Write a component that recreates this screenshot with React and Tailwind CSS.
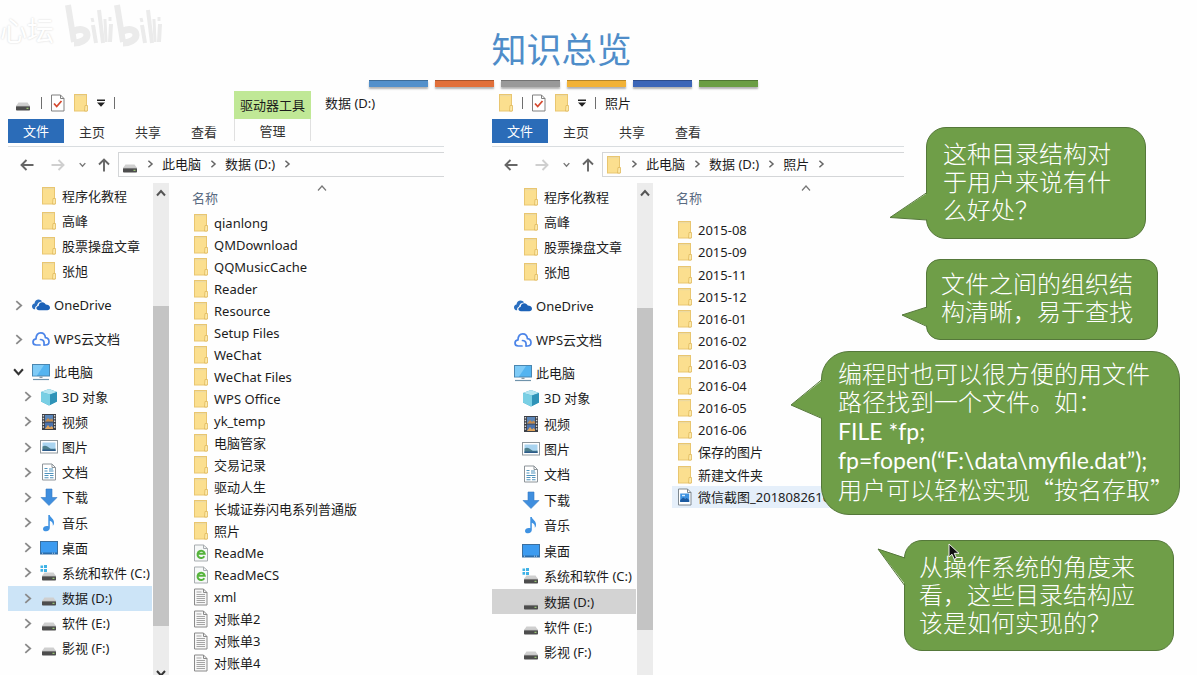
import React from "react";

/* ---------- icons ---------- */

function FolderIcon() {
  return (
    <svg width="14" height="18" viewBox="0 0 14 18" aria-hidden="true" className="shrink-0">
      <rect x="0.5" y="0.5" width="12" height="16.5" fill="#fbdf8f" stroke="#e9c670" />
      <path d="M11 11.5h2.5v5.5H10.5z" fill="#fde9a9" stroke="#dfb95c" strokeWidth="0.8" />
      <path d="M1 1h11v1.2H1z" fill="#ecd9a0" />
    </svg>
  );
}

function DriveIcon({ windows }) {
  return (
    <svg width="18" height="18" viewBox="0 0 18 18" aria-hidden="true" className="shrink-0">
      <path d="M4.5 8.5h9l2.5 3.5H2z" fill="#cfcfcf" />
      <rect x="2" y="12" width="14" height="4.5" rx="0.8" fill="#4d4d4d" />
      <path d="M2 12.4h14" stroke="#8a8a8a" strokeWidth="0.8" />
      <rect x="12.5" y="13.8" width="2" height="1" fill="#a8e07a" />
      {windows && (
        <path d="M0.5 1.5h2.6v2.6H.5zM4 1h3v3.1H4zM.5 5h2.6v2.7H.5zM4 5h3v3H4z" fill="#3fb2e6" />
      )}
    </svg>
  );
}

function OneDriveIcon() {
  return (
    <svg width="18" height="18" viewBox="0 0 18 18" aria-hidden="true" className="shrink-0">
      <path d="M3.2 13.3C1.2 13.2 0 12 0 10.400c0-1.500 1-2.600 2.500-2.900C2.700 5 4.500 3.600 6.600 3.600c1.400 0 2.600.7 3.400 1.800-3 .2-4.800 2-4.900 4.200-1.600.7-2.300 2.200-1.900 3.700z" fill="#2a6fc0" />
      <path d="M7 14.300c-1.600 0-2.600-.9-2.600-2.200 0-1.200.9-2.100 2.200-2.200C6.700 7.600 8.200 6.200 10.200 6.200c1.700 0 3 .9 3.600 2.400 2 0 4.200 1 4.200 3.200 0 1.500-1.200 2.500-2.700 2.500z" fill="#1c62b8" />
    </svg>
  );
}

function WpsCloudIcon() {
  return (
    <svg width="18" height="18" viewBox="0 0 18 18" aria-hidden="true" className="shrink-0" fill="none" stroke="#4b84e8" strokeWidth="1.700" strokeLinecap="round">
      <path d="M8 15H4.300C2.300 15 1 13.700 1 12s1.300-3 3-3.200C4 5 6 2.800 8.700 2.800c2.600 0 4.500 2 4.700 4.800 2 .3 3.600 1.700 3.600 3.900S15.500 15 13.500 15h-1.300" />
      <path d="M8.500 9.500c2 0 3 .8 3.400 2.200.2.900.2 1.800.2 3.300" />
    </svg>
  );
}

function ComputerIcon() {
  return (
    <svg width="18" height="18" viewBox="0 0 18 18" aria-hidden="true" className="shrink-0">
      <rect x="0.5" y="1.500" width="17" height="11.500" fill="#54b4f0" stroke="#4a86b0" />
      <path d="M1 2h11L5 12.500H1z" fill="#7fcbf7" />
      <path d="M7.500 13.500h3v1.500h-3z" fill="#8a9aa6" />
      <path d="M1 16.500h16" stroke="#6f93ab" strokeWidth="1.200" />
    </svg>
  );
}

function CubeIcon() {
  return (
    <svg width="18" height="18" viewBox="0 0 18 18" aria-hidden="true" className="shrink-0">
      <path d="M9 1l8 3v9.500L9 17.500 1 13.500V4z" fill="#43a9c9" />
      <path d="M9 1l8 3L10 6.500 1 4z" fill="#b5e6f2" />
      <path d="M1 4L10 6.500v10.500L9 17.500 1 13.500z" fill="#79cfe4" />
      <path d="M10 6.500L17 4v9.500L10 17z" fill="#2f93b8" />
    </svg>
  );
}

function VideoIcon() {
  return (
    <svg width="18" height="18" viewBox="0 0 18 18" aria-hidden="true" className="shrink-0">
      <rect x="2" y="1" width="14" height="16" fill="#3c3f46" />
      <path d="M3.400 2v14M14.600 2v14" stroke="#d9d9d9" strokeWidth="1.400" strokeDasharray="1.500 1.300" />
      <rect x="5" y="2" width="8" height="6.500" fill="#5b86b9" />
      <path d="M5 8.500l3-3.500 2 2 1.500-1.500L13 7v1.500z" fill="#c58a4a" />
      <rect x="5" y="9.500" width="8" height="6.500" fill="#4a72ad" />
      <path d="M5 16l3-4 2 2.500 1.500-1.500L13 14.500V16z" fill="#e0a45b" />
    </svg>
  );
}

function PictureIcon() {
  return (
    <svg width="18" height="18" viewBox="0 0 18 18" aria-hidden="true" className="shrink-0">
      <rect x="0.500" y="2.500" width="17" height="12.500" fill="#fff" stroke="#8f979c" />
      <rect x="2.500" y="4.500" width="13" height="8.500" fill="#a9d4f0" />
      <path d="M2.500 8.500c3-2 5 0 7 1.500s4 .5 6 .5V13h-13z" fill="#4d7f8c" />
      <path d="M2.500 11.500h13V13h-13z" fill="#2d5b8a" />
    </svg>
  );
}

function DocumentIcon() {
  return (
    <svg width="18" height="18" viewBox="0 0 18 18" aria-hidden="true" className="shrink-0">
      <path d="M2.500 1h9.500l3.500 3.500V17h-13z" fill="#fff" stroke="#8d9499" />
      <path d="M12 1v3.500h3.500" fill="none" stroke="#8d9499" />
      <path d="M4.500 5.500h3M9 6h4M4.500 8h3M9 8h4.500M4.500 10.500h9M4.500 12.500h4M10 12.500h3.500M4.500 14.800h4M10 14.800h3.500" stroke="#4f93bd" strokeWidth="1.100" />
    </svg>
  );
}

function DownloadIcon() {
  return (
    <svg width="18" height="18" viewBox="0 0 18 18" aria-hidden="true" className="shrink-0">
      <path d="M6 1h6v8.500h5L9 17.500 1 9.500h5z" fill="#3f8ede" stroke="#3279c4" strokeWidth="0.600" />
    </svg>
  );
}

function MusicIcon() {
  return (
    <svg width="18" height="18" viewBox="0 0 18 18" aria-hidden="true" className="shrink-0">
      <path d="M8.300 1h1.500c.3 2.500 4.700 3.800 4.200 8.200-.1 1.200-.5 2-1.200 2.600.5-2.700-.8-4.300-3-5V14c0 1.700-1.500 3.200-3.700 3.200-1.900 0-3.100-.9-3.100-2.300 0-1.700 1.700-3 3.800-3 .6 0 1.100.1 1.500.3z" fill="#3f92e2" />
    </svg>
  );
}

function DesktopIcon() {
  return (
    <svg width="18" height="18" viewBox="0 0 18 18" aria-hidden="true" className="shrink-0">
      <rect x="0.500" y="2.500" width="17" height="12.500" fill="#3c9bf0" stroke="#3b6f9f" />
      <path d="M1 13.500h16v1.500H1z" fill="#2a6cab" />
      <path d="M2 14.200h2M12 14.200h4" stroke="#cfe6fa" strokeWidth="0.800" strokeDasharray="1 1" />
    </svg>
  );
}

function TextFileIcon() {
  return (
    <svg width="14" height="18" viewBox="0 0 14 18" aria-hidden="true" className="shrink-0">
      <path d="M0.500 1h9l3.500 3.500V17H.500z" fill="#f7f7f7" stroke="#8a8a8a" />
      <path d="M9.500 1v3.500H13" fill="none" stroke="#8a8a8a" />
      <path d="M2.500 4h5M2.500 6.500h8.500M2.500 8.500h8.500M2.500 10.500h8.500M2.500 12.500h8.500M2.500 14.500h8.500" stroke="#a5a5a5" />
    </svg>
  );
}

function WebFileIcon() {
  return (
    <svg width="14" height="18" viewBox="0 0 14 18" aria-hidden="true" className="shrink-0">
      <path d="M0.500 1h9l4 3.500V17H.500z" fill="#f6f8f8" stroke="#a8adb0" />
      <path d="M9.500 1v3.500h4" fill="none" stroke="#a8adb0" />
      <path d="M10.300 12.200A3.600 3.600 0 1 1 10.700 9.800H4.600" fill="none" stroke="#56b43c" strokeWidth="2" />
    </svg>
  );
}

function ImageFileIcon() {
  return (
    <svg width="14" height="18" viewBox="0 0 14 18" aria-hidden="true" className="shrink-0">
      <path d="M0.500 1h9l3.500 3.500V17H.500z" fill="#fff" stroke="#7e8890" />
      <path d="M9.500 1v3.500H13" fill="none" stroke="#7e8890" />
      <rect x="2.200" y="5.500" width="9" height="8.500" fill="#3f92e0" />
      <path d="M2.200 12l3-2.500 2 1.500 1.500-1 2.500 2v2h-9z" fill="#1c5aa0" />
      <path d="M4 7.500h3" stroke="#d8ecfc" strokeWidth="1.400" />
    </svg>
  );
}

function CheckPageIcon() {
  return (
    <svg width="14" height="18" viewBox="0 0 14 18" aria-hidden="true" className="shrink-0">
      <path d="M0.500 1h9l3.500 3.500V17H.500z" fill="#fff" stroke="#808080" />
      <path d="M9.500 1v3.500H13" fill="none" stroke="#808080" />
      <path d="M3 9.500l2.700 3L10.500 7" fill="none" stroke="#d5492f" strokeWidth="1.800" />
    </svg>
  );
}

function Chevron({ dir = "right", size = 10, color = "#8a8a8a", weight = 1.6 }) {
  const d = {
    right: "M3 1l4.500 4L3 9",
    down: "M1 3l4 4.500L9 3",
    up: "M1 7.500L5 3l4 4.500",
  }[dir];
  return (
    <svg width={size} height={size} viewBox="0 0 10 10" aria-hidden="true" className="shrink-0" fill="none" stroke={color} strokeWidth={weight}>
      <path d={d} />
    </svg>
  );
}

function Arrow({ dir, color }) {
  const d = {
    left: "M13.500 7H1.500M6.500 2L1.500 7l5 5",
    right: "M.500 7h12M7.500 2l5 5-5 5",
    up: "M7 13.500V1.500M2 6.500l5-5 5 5",
  }[dir];
  return (
    <svg width="14" height="14" viewBox="0 0 14 14" aria-hidden="true" className="shrink-0" fill="none" stroke={color} strokeWidth="1.900">
      <path d={d} />
    </svg>
  );
}

/* ---------- explorer window ---------- */

const ICONS = {
  folder: FolderIcon,
  drive: DriveIcon,
  onedrive: OneDriveIcon,
  wps: WpsCloudIcon,
  computer: ComputerIcon,
  cube: CubeIcon,
  video: VideoIcon,
  picture: PictureIcon,
  document: DocumentIcon,
  download: DownloadIcon,
  music: MusicIcon,
  desktop: DesktopIcon,
  text: TextFileIcon,
  web: WebFileIcon,
  image: ImageFileIcon,
};

const PINNED = ["程序化教程", "高峰", "股票操盘文章", "张旭"];

const DEVICES = [
  ["cube", "3D 对象"],
  ["video", "视频"],
  ["picture", "图片"],
  ["document", "文档"],
  ["download", "下载"],
  ["music", "音乐"],
  ["desktop", "桌面"],
  ["system", "系统和软件 (C:)"],
  ["drive", "数据 (D:)"],
  ["drive", "软件 (E:)"],
  ["drive", "影视 (F:)"],
];

function Divider() {
  return <span className="h-3 w-px bg-[#6e6e6e]" />;
}

const INDENTS = {
  left: ["flex w-6 justify-center pr-1", "flex w-8 justify-center pl-[6px]"],
  right: ["w-[22px]", "w-[30px]"],
};

function TreeRow({ icon, label, level, side, expander, className }) {
  const Icon = icon === "system" ? DriveIcon : ICONS[icon];
  return (
    <li className={className}>
      <button type="button" className="flex h-full w-full items-center whitespace-nowrap text-left">
        <span className={"shrink-0 " + INDENTS[side][level]}>
          {expander === "right" && <Chevron size={11} />}
          {expander === "down" && <Chevron dir="down" size={11} color="#333" weight={1.9} />}
        </span>
        <span className="flex w-[18px] shrink-0 justify-center">
          <Icon windows={icon === "system"} />
        </span>
        <span className="pl-1">{label}</span>
      </button>
    </li>
  );
}

function Explorer({ left }) {
  const side = left ? "left" : "right";
  return (
    <section className="flex min-h-0 min-w-0 flex-col">
      <header className="flex h-7 items-start">
        {left ? (
          <>
            <div className="flex h-6 w-[226px] items-center gap-[9px] pl-[6px]">
              <DriveIcon />
              <Divider />
              <CheckPageIcon />
              <FolderIcon />
              <QuickMenu />
              <Divider />
            </div>
            <div className="flex h-7 w-[77px] items-center justify-center whitespace-nowrap bg-[#c0e896]">驱动器工具</div>
            <h2 className="pt-[2px] pl-[14px]">数据 (D:)</h2>
          </>
        ) : (
          <div className="flex h-6 items-center gap-[9px] pl-[7px]">
            <FolderIcon />
            <Divider />
            <CheckPageIcon />
            <FolderIcon />
            <QuickMenu />
            <Divider />
            <h2>照片</h2>
          </div>
        )}
      </header>

      <div className="flex h-7 items-start border-b border-[#d9dde0]">
        <button type="button" className="h-6 w-14 bg-[#2b6cb8] text-white">文件</button>
        <button type="button" className="h-[26px] w-14 text-[#333]">主页</button>
        <button type="button" className="h-[26px] w-14 text-[#333]">共享</button>
        <button type="button" className="h-[26px] w-14 text-[#333]">查看</button>
        {left && (
          <button type="button" className="ml-[2px] h-[22px] w-[77px] border-x border-[#e0e0e0] pt-[2px] text-[#333]">管理</button>
        )}
      </div>

      <div className="mt-[5px] flex h-[25px] items-stretch">
        <div className="flex w-[110px] items-center pl-3">
          <button type="button" aria-label="后退"><Arrow dir="left" color="#666" /></button>
          <button type="button" aria-label="前进" className="ml-[17px]"><Arrow dir="right" color="#cfcfcf" /></button>
          <button type="button" aria-label="最近位置" className="ml-[14px]"><Chevron dir="down" size={7} color="#777" weight={2} /></button>
          <button type="button" aria-label="向上" className="ml-[11px]"><Arrow dir="up" color="#666" /></button>
        </div>
        <div className="flex flex-1 items-center border-y border-l border-[#d4d6d8]">
          <span className="flex w-[19px] justify-center pl-[2px]">{left ? <DriveIcon /> : <FolderIcon />}</span>
          <ol className="flex items-center whitespace-nowrap pb-px">
            {(left ? ["此电脑", "数据 (D:)"] : ["此电脑", "数据 (D:)", "照片"]).map((name) => (
              <li key={name} className="flex items-center">
                <span className="flex w-6 justify-center"><Chevron size={8} color="#666" weight={1.9} /></span>
                <a href="#path">{name}</a>
              </li>
            ))}
            <li className="flex w-6 justify-center"><Chevron size={8} color="#666" weight={1.9} /></li>
          </ol>
        </div>
      </div>

      <div className="flex min-h-0 flex-1 pt-[6px]">
        <nav className={left ? "w-36" : "w-36 pt-px"}>
          <ul className="flex h-[100px] flex-col">
            {PINNED.map((label) => (
              <TreeRow key={label} side={side} icon="folder" label={label} level={1} className="flex-1" />
            ))}
          </ul>
          <ul className="mt-[5px]">
            <TreeRow side={side} icon="onedrive" label="OneDrive" level={0} expander={left && "right"} className="h-[34px]" />
            <TreeRow side={side} icon="wps" label="WPS云文档" level={0} expander={left && "right"} className="h-[34px]" />
          </ul>
          <ul className={left ? "mt-[3px] flex h-[302px] flex-col" : "mt-[3px] flex h-[305px] flex-col"}>
            <TreeRow side={side} icon="computer" label="此电脑" level={0} expander={left && "down"} className="flex-1" />
            {DEVICES.map(([icon, label]) => (
              <TreeRow
                key={label}
                side={side}
                icon={icon}
                label={label}
                level={1}
                expander={left && "right"}
                className={
                  label === "数据 (D:)" ? (left ? "flex-1 bg-[#cce4f7]" : "flex-1 bg-[#d3d3d3]") : "flex-1"
                }
              />
            ))}
          </ul>
        </nav>

        <div className="ml-px flex w-4 flex-col items-center bg-[#ececec]">
          <span className={left ? "flex h-[123px] shrink-0 pt-[5px]" : "flex h-[125px] shrink-0 pt-[5px]"}>
            <Chevron dir="up" color="#555" weight={2} />
          </span>
          <span className={left ? "h-80 w-full shrink-0 bg-[#c4c4c4]" : "h-[322px] w-full shrink-0 bg-[#c4c4c4]"} />
          <span className="mt-[42px] h-2 shrink-0">{left && <Chevron dir="down" color="#333" weight={2} />}</span>
        </div>

        <div className="min-w-0 flex-1 pl-[19px]">
          <div className="flex h-[29px] items-center pl-1">
            <button type="button" className="w-[125px] pt-px text-left text-[#5a6b82]">名称</button>
            <span className="h-full"><Chevron dir="up" color="#777" weight={1.2} /></span>
          </div>
          {left ? (
            <ul className="flex h-[462px] flex-col">
              {LEFT_FILES.map(([icon, name]) => <FileRow key={name} icon={icon} name={name} />)}
            </ul>
          ) : (
            <ul className="mt-[7px] flex h-[289px] flex-col">
              {RIGHT_FILES.map(([icon, name]) => (
                <FileRow key={name} icon={icon} name={name} selected={icon === "image"} />
              ))}
            </ul>
          )}
        </div>
      </div>
    </section>
  );
}

function QuickMenu() {
  return (
    <button type="button" aria-label="自定义快速访问工具栏">
      <svg width="8" height="8" viewBox="0 0 8 8" aria-hidden="true">
        <path d="M0 .500h8v1.500H0zM0 3.500h8L4 7.800z" fill="#222" />
      </svg>
    </button>
  );
}

const LEFT_FILES = [
  "qianlong", "QMDownload", "QQMusicCache", "Reader", "Resource", "Setup Files", "WeChat",
  "WeChat Files", "WPS Office", "yk_temp", "电脑管家", "交易记录", "驱动人生", "长城证券闪电系列普通版", "照片",
].map((name) => ["folder", name]).concat([
  ["web", "ReadMe"],
  ["web", "ReadMeCS"],
  ["text", "xml"],
  ["text", "对账单2"],
  ["text", "对账单3"],
  ["text", "对账单4"],
]);

const RIGHT_FILES = [
  "2015-08", "2015-09", "2015-11", "2015-12", "2016-01", "2016-02", "2016-03", "2016-04",
  "2016-05", "2016-06", "保存的图片", "新建文件夹",
].map((name) => ["folder", name]).concat([["image", "微信截图_2018082616"]]);

function FileRow({ icon, name, selected }) {
  const Icon = ICONS[icon];
  return (
    <li className={selected ? "flex-1 bg-[#e5effa]" : "flex-1"}>
      <button type="button" className="flex h-full w-full items-center gap-[6px] overflow-hidden whitespace-nowrap pl-[6px] text-left">
        <Icon />
        <span>{name}</span>
      </button>
    </li>
  );
}

/* ---------- callouts ---------- */

function Callout({ className, tailClass, tailSize, tail, edge, children }) {
  return (
    <div
      className={
        "relative border border-[#55783a] bg-[#6f9e48] font-['Liberation_Sans','Noto_Sans_CJK_SC',sans-serif] text-[24px] leading-7 font-light text-white " +
        className
      }
    >
      <svg
        width={tailSize[0]}
        height={tailSize[1]}
        viewBox={`0 0 ${tailSize[0]} ${tailSize[1]}`}
        aria-hidden="true"
        className={"absolute " + tailClass}
      >
        <path d={tail} fill="#6f9e48" />
        <path d={edge} fill="none" stroke="#55783a" />
      </svg>
      {children}
    </div>
  );
}

function Callouts() {
  return (
    <aside className="absolute top-[127px] right-0 flex w-[408px] flex-col items-start">
      <Callout
        className="ml-[137px] w-[220px] rounded-[20px] pt-[13px] pr-4 pb-[13px] pl-4"
        tailClass="top-[63px] left-[-38px]"
        tailSize={[40, 30]}
        tail="M40 1L1 26.500L40 29z"
        edge="M38 1.500L1 26.500L38 29"
      >
        <p>这种目录结构对<br />于用户来说有什<br />么好处？</p>
      </Callout>

      <Callout
        className="mt-5 ml-[137px] w-[232px] rounded-[14px] pt-[11px] pr-3 pb-[12px] pl-[14px]"
        tailClass="top-[46px] left-[-26px]"
        tailSize={[28, 22]}
        tail="M28 .500L1 9L28 21z"
        edge="M26 1L1 9L26 20.500"
      >
        <p>文件之间的组织结<br />构清晰，易于查找</p>
      </Callout>

      <Callout
        className="mt-[11px] ml-8 w-[359px] whitespace-nowrap rounded-[28px] pt-[9px] pb-[9px] pl-4"
        tailClass="top-[26px] left-[-32px]"
        tailSize={[34, 42]}
        tail="M34 1L1 27L34 41z"
        edge="M32 1.500L1 27L32 40.500"
      >
        <p>编程时也可以很方便的用文件<br />路径找到一个文件。如：</p>
        <p className="h-[58px] font-[Lato,'Noto_Sans_CJK_SC',sans-serif] text-[23px] leading-[29px] font-normal">
          FILE *fp;<br />fp=fopen(“F:\data\myfile.dat”);
        </p>
        <p>
          用户可以轻松实现<span className="font-['Noto_Sans_CJK_SC',sans-serif]">“</span>按名存取<span className="font-['Noto_Sans_CJK_SC',sans-serif]">”</span>
        </p>
      </Callout>

      <Callout
        className="mt-[25px] ml-[115px] w-[270px] rounded-[18px] pt-[13px] pr-4 pb-[12px] pl-[14px]"
        tailClass="top-[7px] left-[-28px]"
        tailSize={[30, 42]}
        tail="M30 10.500L1 1L30 39z"
        edge="M28 10L1 1L28 38"
      >
        <p>从操作系统的角度来<br />看，这些目录结构应<br />该是如何实现的？</p>
        <svg width="12" height="18" viewBox="0 0 12 18" aria-hidden="true" className="absolute top-[2px] left-[43px]">
          <path d="M1 1v13l3-2.800 2.200 5 2.300-1-2.200-4.900H11z" fill="#111" stroke="#fff" strokeWidth="0.900" />
        </svg>
      </Callout>
    </aside>
  );
}

/* ---------- slide ---------- */

const BARS = ["bg-[#5390cb]", "bg-[#e2703a]", "bg-[#999999]", "bg-[#f2b236]", "bg-[#3c66b8]", "bg-[#6b9e44]"];

function Watermark() {
  return (
    <div className="absolute top-0 left-0 flex items-center gap-[10px] pt-1">
      <span className="pt-2 text-[27px] leading-8 text-white [text-shadow:0_0_2px_#d0d0d0]">心坛</span>
      <svg width="98" height="46" viewBox="0 0 98 46" aria-hidden="true" fill="none" stroke="#ebebeb">
        <g id="half">
          <path d="M4 1l6 37" strokeWidth="6" />
          <path d="M10 27c7-3 13-1 13 4s-7 8-13 8" strokeWidth="7" />
          <path d="M29 21l3 18M47 20l-1 18" strokeWidth="4" />
          <path d="M35 6l4 33" strokeWidth="4" />
          <path d="M28 14l1 4M46 13v4M41 15l1 23" strokeWidth="3" />
        </g>
        <use href="#half" x="49" />
      </svg>
    </div>
  );
}

export default function App() {
  return (
    <main className="relative flex h-screen w-full flex-col overflow-hidden bg-[#fefefe] font-['Noto_Sans','Noto_Sans_CJK_SC',sans-serif] text-[13px] leading-5 text-[#1c1c1c]">
      <Watermark />
      <div className="flex flex-col items-center pr-[70px]">
        <h1 className="mt-7 pr-1 text-[35px] leading-[44px] font-normal text-[#4f8dc9]">知识总览</h1>
        <div className="mt-2 flex gap-[7px]">
          {BARS.map((color) => (
            <span key={color} className={"h-[7px] w-[59px] border-t border-black/25 shadow-[0_2px_2px_rgba(0,0,0,0.3)] " + color} />
          ))}
        </div>
      </div>
      <div className="mt-1 grid min-h-0 flex-1 grid-cols-[436fr_412fr_245fr] gap-x-12 pl-2">
        <Explorer left />
        <Explorer />
      </div>
      <Callouts />
    </main>
  );
}
